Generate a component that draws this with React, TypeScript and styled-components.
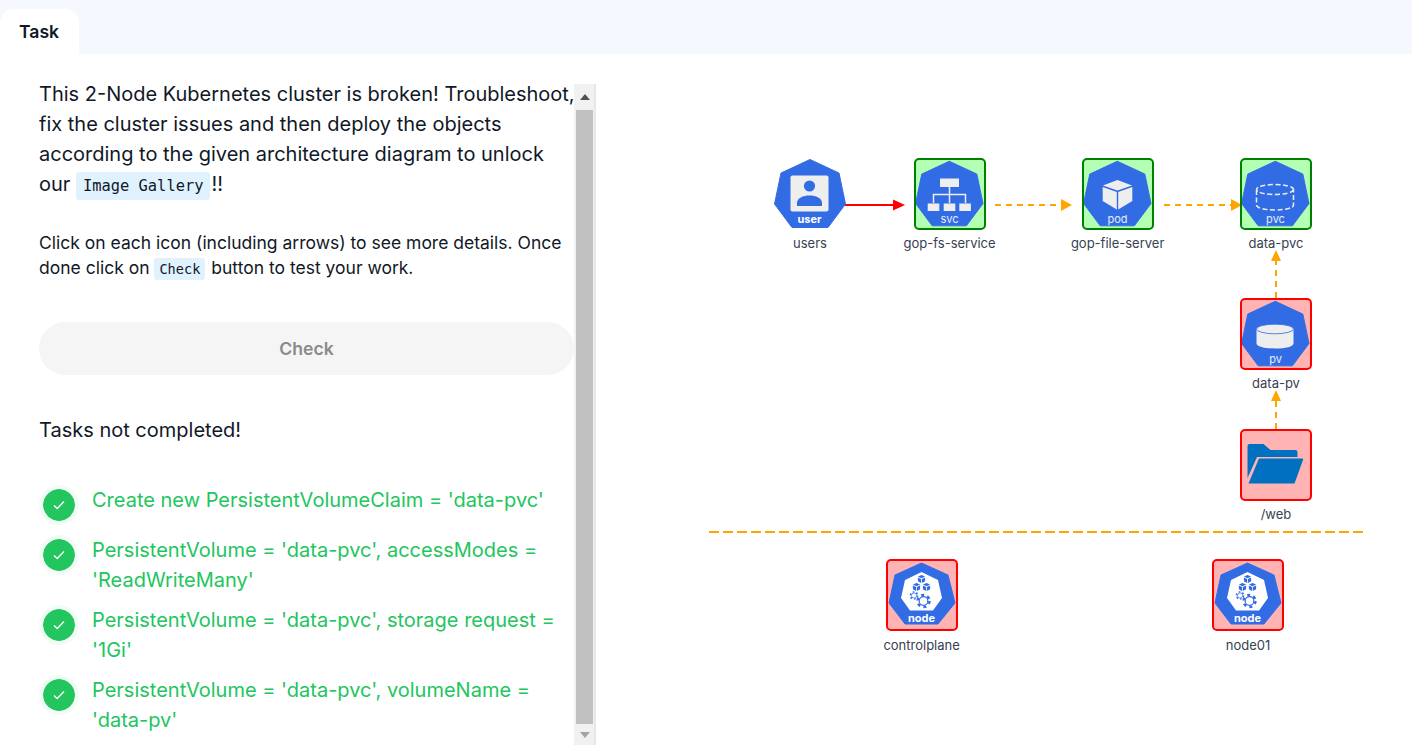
import styled, { createGlobalStyle } from "styled-components";
import { ReactNode } from "react";

const GlobalStyle = createGlobalStyle`
  html, body { margin: 0; padding: 0; height: 100%; background: #fff; }
  body { font-family: Inter, "Liberation Sans", sans-serif; color: #111827; overflow: hidden; }
  #root { height: 100%; }
`;

const Page = styled.div`
  width: 1412px;
  height: 745px;
  display: flex;
  flex-direction: column;
  overflow: hidden;
`;
const TabBar = styled.div`
  height: 54px;
  flex: none;
  background: #f5f9ff;
  display: flex;
  align-items: flex-end;
`;
const Tab = styled.div`
  width: 79px;
  height: 45px;
  box-sizing: border-box;
  padding: 13px 0 0 19px;
  background: #fff;
  border-radius: 14px 14px 0 0;
  font-size: 17.6px;
  line-height: 20px;
  font-weight: 600;
  color: #111827;
`;
const Body = styled.div`
  flex: 1;
  display: flex;
  min-height: 0;
`;
const LeftPanel = styled.div`
  width: 596px;
  flex: none;
  display: flex;
  box-sizing: border-box;
  padding-left: 39px;
  overflow: hidden;
`;
const Content = styled.div`
  width: 535px;
  flex: none;
  padding-top: 25px;
`;
const Lead = styled.p`
  margin: 0 0 29px;
  font-size: 20px;
  line-height: 30px;
  white-space: nowrap;
`;
const Hint = styled.p`
  margin: 0 0 40px;
  font-size: 17.5px;
  line-height: 25px;
  white-space: nowrap;
`;
const Code = styled.code<{ $small?: boolean }>`
  font-family: "DejaVu Sans Mono", "Liberation Mono", monospace;
  font-size: ${(p) => (p.$small ? "13.6px" : "15.4px")};
  background: #e0f2fe;
  border-radius: 3px;
  padding: ${(p) => (p.$small ? "3px 5px" : "5px 7px")};
  margin: 0 1px 0 0;
`;
const CheckButton = styled.button`
  display: block;
  width: 535px;
  height: 53px;
  padding: 0;
  border: 0;
  border-radius: 27px;
  background: #f5f5f5;
  color: #8a8a8a;
  font-family: inherit;
  font-size: 17.6px;
  font-weight: 600;
`;
const Status = styled.p`
  margin: 40px 0 40px;
  font-size: 20px;
  line-height: 30px;
`;
const TaskList = styled.ul`
  list-style: none;
  margin: 0;
  padding: 0;
  display: flex;
  flex-direction: column;
  gap: 10px;
`;
const TaskItem = styled.li`
  display: flex;
  gap: 13px;
  font-size: 20px;
  line-height: 30px;
  color: #22c55e;
`;
const TaskBadge = styled.span`
  flex: none;
  width: 32px;
  height: 32px;
  border: 4px solid #f0fdf4;
  border-radius: 50%;
  background: #22c55e;
  background-clip: padding-box;
  display: flex;
  align-items: center;
  justify-content: center;
`;
const TaskText = styled.span`
  width: 470px;
`;
const Scrollbar = styled.div`
  width: 22px;
  box-sizing: border-box;
  flex: none;
  margin-top: 30px;
  background: #f1f1f1;
  border-right: 2px solid #e5e7eb;
  display: flex;
  flex-direction: column;
  padding: 0 1px 0 2px;
`;
const ScrollButton = styled.div<{ $height: number }>`
  height: ${(p) => p.$height}px;
  flex: none;
  display: flex;
  align-items: center;
  justify-content: center;
`;
const ScrollThumb = styled.div`
  flex: 1;
  background: #c1c1c1;
`;
const Canvas = styled.div`
  flex: 1;
  position: relative;
`;
const Arrows = styled.svg`
  position: absolute;
  left: 0;
  top: 0;
`;
const NodeWrap = styled.div<{ $x: number; $y: number }>`
  position: absolute;
  left: ${(p) => p.$x - 596}px;
  top: ${(p) => p.$y - 54}px;
  width: 72px;
  display: flex;
  flex-direction: column;
  align-items: center;
`;
const NodeBox = styled.div<{ $tone?: "ok" | "bad" }>`
  width: 72px;
  height: 72px;
  box-sizing: border-box;
  border-radius: 5px;
  border: ${(p) => (p.$tone === "ok" ? "2px solid #008000" : p.$tone === "bad" ? "2px solid #ff0000" : "0")};
  background: ${(p) => (p.$tone === "ok" ? "#b3ffb3" : p.$tone === "bad" ? "#ffb3b3" : "transparent")};
  overflow: hidden;
`;
const NodeLabel = styled.div<{ $gap?: number }>`
  margin-top: ${(p) => p.$gap ?? 5}px;
  font-size: 13px;
  line-height: 16px;
  color: #374151;
  white-space: nowrap;
`;
const IconSvg = styled.svg`
  display: block;
  margin: -2px;
`;
const PlainIconSvg = styled.svg`
  display: block;
`;
const HexText = styled.text<{ $bold?: boolean }>`
  font-family: Inter, "Liberation Sans", sans-serif;
  font-size: 11px;
  font-weight: ${(p) => (p.$bold ? 700 : 400)};
  fill: ${(p) => (p.$bold ? "#fff" : "#e8ecf8")};
  text-anchor: middle;
`;

const BLUE = "#326ce5";
const PALE = "#eeeeee";
const HEPTAGON = "36,1.5 65,15 71.5,46 54,69.5 18,69.5 0.5,46 7,15";

function Hex({ label, bold, boxed, children }: { label: string; bold?: boolean; boxed?: boolean; children: ReactNode }) {
  return (
    <>
      <polygon
        points={HEPTAGON}
        fill={BLUE}
        stroke={BLUE}
        strokeWidth="1"
        strokeLinejoin="round"
        transform={boxed ? "translate(35.3 36) scale(.95) translate(-36 -36)" : undefined}
      />
      {children}
      <HexText x="35.5" y="65" $bold={bold}>
        {label}
      </HexText>
    </>
  );
}

function UserIcon() {
  return (
    <PlainIconSvg width="72" height="72" viewBox="0 0 72 72">
      <Hex label="user" bold>
        <rect x="16.5" y="17.5" width="38" height="36" rx="2" fill={PALE} />
        <circle cx="35.5" cy="28" r="5.6" fill={BLUE} />
        <path d="M23 48v-3c0-5 6-7.5 12.5-7.5S48 40 48 45v3z" fill={BLUE} />
      </Hex>
    </PlainIconSvg>
  );
}

function ServiceIcon() {
  return (
    <IconSvg width="72" height="72" viewBox="0 0 72 72">
      <Hex label="svc" boxed>
        <path d="M35.5 28v17M19.5 45v-8.5h32V45" fill="none" stroke={PALE} strokeWidth="1.5" />
        <rect x="26" y="20.5" width="19" height="8.5" fill={PALE} />
        <rect x="13.7" y="45.5" width="11.6" height="7.5" fill={PALE} />
        <rect x="29.7" y="45.5" width="11.6" height="7.5" fill={PALE} />
        <rect x="45.3" y="45.5" width="11.6" height="7.5" fill={PALE} />
      </Hex>
    </IconSvg>
  );
}

function PodIcon() {
  return (
    <IconSvg width="72" height="72" viewBox="0 0 72 72">
      <Hex label="pod" boxed>
        <polygon points="35.5,22 50,27.5 35.5,32.5 21,27.5" fill={PALE} />
        <polygon points="20.7,29 34.8,34 34.8,51.5 20.7,43" fill={PALE} />
        <polygon points="50.3,29 36.2,34 36.2,51.5 50.3,43" fill={PALE} />
      </Hex>
    </IconSvg>
  );
}

function ClaimIcon() {
  return (
    <IconSvg width="72" height="72" viewBox="0 0 72 72">
      <Hex label="pvc" boxed>
        <g fill="none" stroke={PALE} strokeWidth="1.5" strokeDasharray="5 2.5">
          <ellipse cx="35" cy="31.5" rx="18.5" ry="5" />
          <path d="M16.5 32v15c0 3 8 5 18.5 5s18.5-2 18.5-5V32" />
        </g>
      </Hex>
    </IconSvg>
  );
}

function VolumeIcon() {
  return (
    <IconSvg width="72" height="72" viewBox="0 0 72 72">
      <Hex label="pv" boxed>
        <path d="M16.5 31v14.5c0 3 8 5 18.5 5s18.5-2 18.5-5V31z" fill={PALE} />
        <ellipse cx="35" cy="31" rx="18.5" ry="4.8" fill={PALE} stroke={BLUE} strokeWidth="0.8" />
      </Hex>
    </IconSvg>
  );
}

function FolderIcon() {
  return (
    <IconSvg width="72" height="72" viewBox="0 0 72 72">
      <path d="M7.5 17q0-2 2-2h14l7 6h25q2 0 2 2v5H17L7.5 49z" fill="#0070c0" />
      <path d="M19 29.5h43q1.5 0 1 1.5l-8.5 23.5H8.5z" fill="#0070c0" />
    </IconSvg>
  );
}

function Gear({ x, y, r }: { x: number; y: number; r: number }) {
  return (
    <g fill="none" stroke={BLUE}>
      <circle cx={x} cy={y} r={r} strokeWidth={r * 0.4} strokeDasharray={`${r * 0.5} ${r * 0.55}`} />
      <circle cx={x} cy={y} r={r * 0.72} strokeWidth={r * 0.2} />
    </g>
  );
}

function MiniCube({ x, y }: { x: number; y: number }) {
  return (
    <g fill={BLUE}>
      <polygon points={`${x},${y - 4} ${x + 3.6},${y - 2.4} ${x},${y - 0.8} ${x - 3.6},${y - 2.4}`} />
      <polygon points={`${x - 3.6},${y - 1.6} ${x - 0.4},${y} ${x - 0.4},${y + 4} ${x - 3.6},${y + 2.2}`} />
      <polygon points={`${x + 3.6},${y - 1.6} ${x + 0.4},${y} ${x + 0.4},${y + 4} ${x + 3.6},${y + 2.2}`} />
    </g>
  );
}

function ClusterNodeIcon() {
  return (
    <IconSvg width="72" height="72" viewBox="0 0 72 72">
      <polygon points="35.5,4 62,16 69,44 52,65 19,65 3,44 9,16" fill={BLUE} stroke={BLUE} strokeLinejoin="round" />
      <polygon points="35.5,13 52,21 56,39 47,51.5 24,51.5 15,39 19,21" fill="#fff" />
      <MiniCube x={35.5} y={20} />
      <MiniCube x={30.5} y={28} />
      <MiniCube x={40.5} y={28} />
      <Gear x={28} y={36.5} r={3.6} />
      <Gear x={37.5} y={42} r={6} />
      <HexText x="35.5" y="62.5" $bold>
        node
      </HexText>
    </IconSvg>
  );
}

const tasks = [
  "Create new PersistentVolumeClaim = 'data-pvc'",
  "PersistentVolume = 'data-pvc', accessModes = 'ReadWriteMany'",
  "PersistentVolume = 'data-pvc', storage request = '1Gi'",
  "PersistentVolume = 'data-pvc', volumeName = 'data-pv'",
];

function DiagramNode(props: {
  x: number;
  y: number;
  label: string;
  tone?: "ok" | "bad";
  labelGap?: number;
  children: ReactNode;
}) {
  return (
    <NodeWrap $x={props.x} $y={props.y}>
      <NodeBox $tone={props.tone}>{props.children}</NodeBox>
      <NodeLabel $gap={props.labelGap}>{props.label}</NodeLabel>
    </NodeWrap>
  );
}

function DiagramArrows() {
  const ox = 596;
  const oy = 54;
  const orange = "#ffa500";
  return (
    <Arrows width="816" height="691" viewBox={`${ox} ${oy} 816 691`}>
      <line x1="845" y1="205" x2="896" y2="205" stroke="#ff0000" strokeWidth="1.8" />
      <polygon points="893,199.5 905,205 893,210.5" fill="#ff0000" />
      <g stroke={orange} strokeWidth="2" strokeDasharray="6 5" fill="none">
        <line x1="995" y1="205" x2="1062" y2="205" />
        <line x1="1164" y1="205" x2="1231" y2="205" />
        <line x1="1276" y1="298" x2="1276" y2="261" />
        <line x1="1276" y1="429" x2="1276" y2="401" />
        <line x1="709" y1="532" x2="1363" y2="532" strokeDasharray="10 4" />
      </g>
      <g fill={orange}>
        <polygon points="1061,199 1072,205 1061,211" />
        <polygon points="1231,199 1242,205 1231,211" />
        <polygon points="1271,261 1276,250 1281,261" />
        <polygon points="1271,401 1276,390 1281,401" />
      </g>
    </Arrows>
  );
}

export default function App() {
  return (
    <Page>
      <GlobalStyle />
      <TabBar>
        <Tab>Task</Tab>
      </TabBar>
      <Body>
        <LeftPanel>
          <Content>
            <Lead>
              This 2-Node Kubernetes cluster is broken! Troubleshoot,
              <br />
              fix the cluster issues and then deploy the objects
              <br />
              according to the given architecture diagram to unlock
              <br />
              our <Code>Image Gallery</Code>!!
            </Lead>
            <Hint>
              Click on each icon (including arrows) to see more details. Once
              <br />
              done click on <Code $small>Check</Code> button to test your work.
            </Hint>
            <CheckButton>Check</CheckButton>
            <Status>Tasks not completed!</Status>
            <TaskList>
              {tasks.map((t) => (
                <TaskItem key={t}>
                  <TaskBadge>
                    <svg width="14" height="14" viewBox="0 0 14 14" fill="none">
                      <path d="M2 7.5l3.2 3L12 3.5" stroke="#fff" strokeWidth="1.4" />
                    </svg>
                  </TaskBadge>
                  <TaskText>{t}</TaskText>
                </TaskItem>
              ))}
            </TaskList>
          </Content>
          <Scrollbar>
            <ScrollButton $height={26}>
              <svg width="10" height="6" viewBox="0 0 10 6">
                <polygon points="5,0 10,6 0,6" fill="#505050" />
              </svg>
            </ScrollButton>
            <ScrollThumb />
            <ScrollButton $height={21}>
              <svg width="10" height="6" viewBox="0 0 10 6">
                <polygon points="0,0 10,0 5,6" fill="#a3a3a3" />
              </svg>
            </ScrollButton>
          </Scrollbar>
        </LeftPanel>
        <Canvas>
          <DiagramArrows />
          <DiagramNode x={774} y={158} label="users">
            <UserIcon />
          </DiagramNode>
          <DiagramNode x={913.6} y={158} label="gop-fs-service" tone="ok">
            <ServiceIcon />
          </DiagramNode>
          <DiagramNode x={1081.6} y={158} label="gop-file-server" tone="ok">
            <PodIcon />
          </DiagramNode>
          <DiagramNode x={1240} y={158} label="data-pvc" tone="ok">
            <ClaimIcon />
          </DiagramNode>
          <DiagramNode x={1240} y={298} label="data-pv" tone="bad">
            <VolumeIcon />
          </DiagramNode>
          <DiagramNode x={1240} y={429} label="/web" tone="bad">
            <FolderIcon />
          </DiagramNode>
          <DiagramNode x={885.6} y={559} label="controlplane" tone="bad" labelGap={6}>
            <ClusterNodeIcon />
          </DiagramNode>
          <DiagramNode x={1212} y={559} label="node01" tone="bad" labelGap={6}>
            <ClusterNodeIcon />
          </DiagramNode>
        </Canvas>
      </Body>
    </Page>
  );
}
